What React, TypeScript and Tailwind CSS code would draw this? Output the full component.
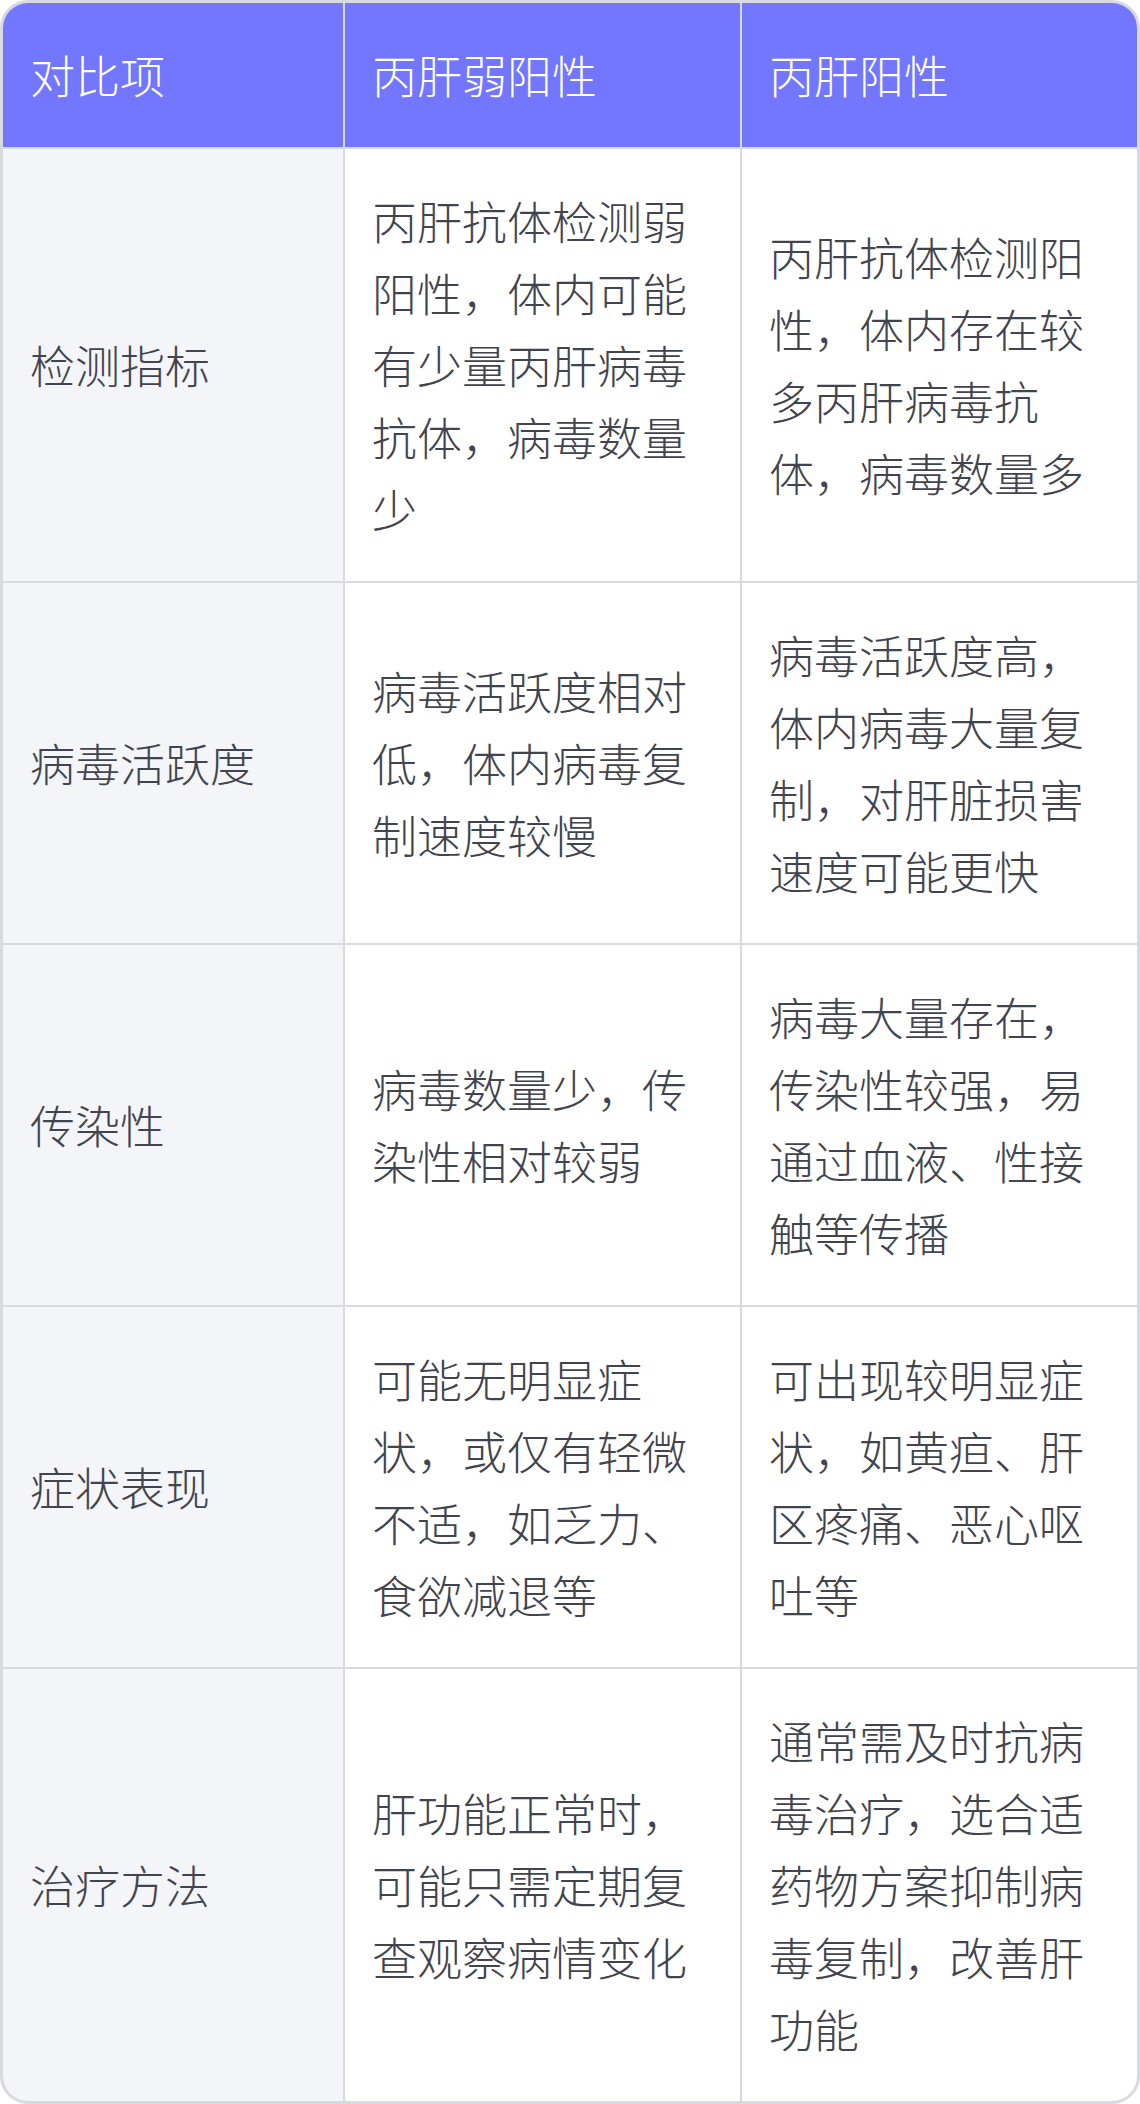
const rows: [string, string, string][] = [
  [
    '检测指标',
    '丙肝抗体检测弱阳性，体内可能有少量丙肝病毒抗体，病毒数量少',
    '丙肝抗体检测阳性，体内存在较多丙肝病毒抗体，病毒数量多',
  ],
  [
    '病毒活跃度',
    '病毒活跃度相对低，体内病毒复制速度较慢',
    '病毒活跃度高，体内病毒大量复制，对肝脏损害速度可能更快',
  ],
  [
    '传染性',
    '病毒数量少，传染性相对较弱',
    '病毒大量存在，传染性较强，易通过血液、性接触等传播',
  ],
  [
    '症状表现',
    '可能无明显症状，或仅有轻微不适，如乏力、食欲减退等',
    '可出现较明显症状，如黄疸、肝区疼痛、恶心呕吐等',
  ],
  [
    '治疗方法',
    '肝功能正常时，可能只需定期复查观察病情变化',
    '通常需及时抗病毒治疗，选合适药物方案抑制病毒复制，改善肝功能',
  ],
]

const headers = ['对比项', '丙肝弱阳性', '丙肝阳性']

export default function App() {
  return (
    <div
      className="w-[1140px] bg-white font-light"
      style={{ fontFamily: '"Noto Sans CJK SC", "Noto Sans", sans-serif' }}
    >
      <div className="rounded-[28px] overflow-hidden border-[3px] border-[#d9dadf] bg-[#d9dadf]">
        <div className="grid grid-cols-[340px_395px_395px] gap-[2px] text-[45px] leading-[72px]">
          {headers.map(h => (
            <div key={h} className="bg-[#7376ff] text-white px-[27px] py-[36px]">
              {h}
            </div>
          ))}
          {rows.map(([label, weak, pos]) => (
            <div key={label} className="contents">
              <div className="bg-[#f4f5f9] text-[#41444e] px-[27px] py-[36px] flex items-center">
                {label}
              </div>
              <div className="bg-white text-[#41444e] px-[27px] py-[36px] flex items-center">
                <span>{weak}</span>
              </div>
              <div className="bg-white text-[#41444e] px-[27px] py-[36px] flex items-center">
                <span>{pos}</span>
              </div>
            </div>
          ))}
        </div>
      </div>
    </div>
  )
}
